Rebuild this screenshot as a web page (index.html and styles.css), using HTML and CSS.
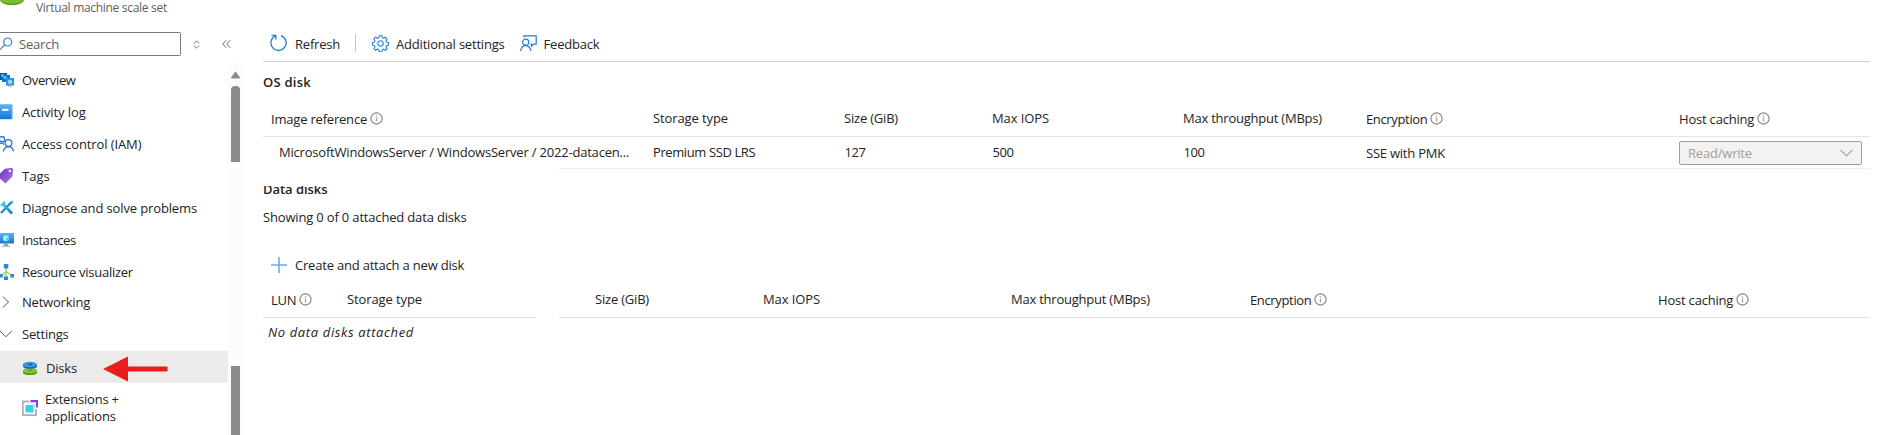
FILE: index.html
```
<!DOCTYPE html>
<html lang="en">
<head>
<meta charset="utf-8">
<title>Disks</title>
<link rel="stylesheet" href="styles.css">
</head>
<body>
<svg width="0" height="0" class="defs" aria-hidden="true">
  <defs>
    <linearGradient id="blue" x1="0" y1="0" x2="0" y2="1"><stop offset="0" stop-color="#5db4f0"/><stop offset="1" stop-color="#0f78d4"/></linearGradient>
    <linearGradient id="purple" x1="0" y1="0" x2="1" y2="1"><stop offset="0" stop-color="#6a35cf"/><stop offset="1" stop-color="#a878dc"/></linearGradient>
    <linearGradient id="teal" x1="0" y1="0" x2="1" y2="1"><stop offset="0" stop-color="#35c5ee"/><stop offset="1" stop-color="#1583bd"/></linearGradient>
    <symbol id="info" viewBox="0 0 13 13"><circle cx="6.5" cy="6.5" r="5.6" fill="none" stroke="#85837f" stroke-width="1.1"/><path d="M6.5 5.600v4M6.500 3.200v1.400" stroke="#a8a6a4" stroke-width="1.400"/></symbol>
  </defs>
</svg>
<div class="app">
  <aside class="side">
    <header class="head">
      <svg class="head-icon" width="24" height="5" viewBox="0 0 24 5"><path d="M0 0H24C23.500 3 18 5 12 5S.5 3 0 0Z" fill="#5e9624"/><path d="M0 0H24C22 2.500 17 3.600 12 3.600S2 2.500 0 0Z" fill="#7ac02d"/></svg>
      <span>Virtual machine scale set</span>
    </header>
    <div class="find">
      <div class="search">
        <svg width="14" height="14" viewBox="0 0 14 14" fill="none" stroke="#2f86d6" stroke-width="1.200"><circle cx="8.700" cy="5" r="4"/><path d="M5.800 7.800 0 13.500"/></svg>
        <span>Search</span>
      </div>
      <svg class="sort" width="7" height="9" viewBox="0 0 7 9" fill="none" stroke="#777" stroke-width="1"><path d="M.8 3.500 3.500.8 6.200 3.500M.8 5.500 3.500 8.200 6.200 5.500"/></svg>
      <svg class="collapse" width="9" height="8" viewBox="0 0 9 8" fill="none" stroke="#6b6967" stroke-width="1"><path d="M4.200.3.700 4 4.200 7.700M8.200.3 4.700 4 8.200 7.700"/></svg>
    </div>
    <div class="body">
      <nav class="menu">
        <a class="item tight"><svg width="15" height="16" viewBox="0 0 15 16"><path d="M0 1h7v7H0z" fill="#0b59a8"/><path d="M2 3h8v7H2z" fill="#1673c8"/><path d="M1 2h3v3H1z" fill="#40a8ee"/><path d="M6 6h8v7.500H6z" fill="#2b8de4"/><path d="M3.500 4h3v3h-3z" fill="#56bdf5"/><path d="m10 7.500 2.200 1.200v2.400L10 12.300 7.800 11.100V8.700z" fill="#9be0fb"/><path d="M7.500 15h4.500l-1-1.500H8.500z" fill="#b3b8bc"/></svg><span>Overview</span></a>
        <a class="item loose"><svg width="15" height="16" viewBox="0 0 15 16"><path d="M0 0h11.500q1.500 0 1.500 1.500v12.500q0 1.500-1.500 1.500H0z" fill="#a5cdea"/><path d="M0 .5h10.500q1.200 0 1.200 1.200V15H0z" fill="url(#blue)"/><path d="M2 4.800h6.500v2H2z" fill="#fff"/></svg><span>Activity log</span></a>
        <a class="item loose"><svg width="15" height="16" viewBox="0 0 15 16" fill="none" stroke="#2b6fd8" stroke-width="1.300"><circle cx="2" cy="3.200" r="2.700"/><path d="M0 7.500q2.500-1 4 1.200"/><circle cx="8.500" cy="7" r="3.400"/><path d="M3.300 15.500q.8-4.500 5.200-4.900 4.300.4 5 4.900"/></svg><span>Access control (IAM)</span></a>
        <a class="item wide"><svg width="15" height="16" viewBox="0 0 15 16"><path d="M5 .8 11.500 0q1.300 0 1.400 1.300L12.600 8 5.500 15.500 0 10.500V5.500z" fill="url(#purple)"/><circle cx="9.800" cy="3" r="1.200" fill="#fff"/></svg><span>Tags</span></a>
        <a class="item diagnose"><svg width="15" height="16" viewBox="0 0 15 16"><path d="M11.500 2 1 13" stroke="#1689c2" stroke-width="2.200"/><path d="m13 1-3 3.500" stroke="#1c9ad4" stroke-width="1.200"/><path d="m2.500 3.500 9.500 10" stroke="url(#teal)" stroke-width="2.800"/><path d="M0 4.800Q2.500 7.500 4.500 5T3.500.8L3 3 1.300 4z" fill="#35c5ee"/></svg><span>Diagnose and solve problems</span></a>
        <a class="item tighter"><svg width="15" height="16" viewBox="0 0 15 16"><path d="M0 1h14v10.500H0z" fill="url(#blue)"/><path d="M4.500 11.500h3L9 14.500H3z" fill="#9da2a6"/><path d="M2 14h8.500v1.200H2z" fill="#c4c7c9"/><path d="M6 3 9 4.600V8L6 9.600 3 8V4.600z" fill="#a6ecfb"/><path d="m6 6.200 3-1.600V8L6 9.600z" fill="#62cdf2"/></svg><span>Instances</span></a>
        <a class="item visual"><svg width="15" height="16" viewBox="0 0 15 16"><path d="M6 4v9M6 7.500 1 11.500M6 7.500l6 4" stroke="#9bd95c" stroke-width="1.500" fill="none"/><path d="M3.800 0h4.500v4.500H3.800zM0 10h2.800v3.500H0zM10.500 10H14v3.500h-3.500zM4 12.500h4V16H4z" fill="#2f87dc"/></svg><span>Resource visualizer</span></a>
        <a class="item group"><svg width="15" height="16" viewBox="0 0 15 16" fill="none" stroke="#555"><path d="m3 2.500 5.500 5.500L3 13.500"/></svg><span>Networking</span></a>
        <a class="item"><svg width="15" height="16" viewBox="0 0 15 16" fill="none" stroke="#555"><path d="m0 5 5.900 5.700L11.800 5"/></svg><span>Settings</span></a>
        <a class="item sub selected"><svg width="15" height="16" viewBox="0 0 15 16"><path d="M0 10.500h14v2.200C14 14.500 10.500 15 7 15s-7-.5-7-2.300z" fill="#5e9a1e"/><ellipse cx="7" cy="10.500" rx="7" ry="2.800" fill="#85c52f"/><ellipse cx="7" cy="10.200" rx="2.500" ry=".8" fill="#5e9a1e"/><path d="M0 4.500h14v1.700C14 8 10.500 8.700 7 8.700S0 8 0 6.200z" fill="#1466b8"/><ellipse cx="7" cy="4.500" rx="7" ry="2.800" fill="#3c95ea"/><ellipse cx="7" cy="4.400" rx="2.500" ry=".8" fill="#1259a5"/></svg><span>Disks</span>
          <svg class="arrow" width="65" height="26" viewBox="0 0 65 26"><path d="M0 13 25 .5V10.500H64.500v5H25V25.500z" fill="#e81e1e"/></svg>
        </a>
        <a class="item sub ext"><svg width="16" height="16" viewBox="0 0 16 16"><path d="M7 1.500H.8V15.200H14V9" fill="none" stroke="#aeb0b2" stroke-width="1.800"/><path d="M3.500 5h8v7.500h-8z" fill="#35d0ee"/><path d="M8.500 1h6.500v6.500" fill="none" stroke="#7d3fdc" stroke-width="1.900"/><path d="M7 2.500h5.500V8.500" fill="none" stroke="#dccdf6"/></svg><span>Extensions +<br>applications</span></a>
      </nav>
      <div class="track">
        <svg width="9" height="8" viewBox="0 0 9 8"><path d="M4.500.3 9 6.500Q9 7.500 8 7.500H1Q0 7.500 0 6.500z" fill="#8b8b8b"/></svg>
        <div class="thumb"></div>
        <div class="thumb rest"></div>
      </div>
    </div>
  </aside>
  <main class="main">
    <div class="toolbar">
      <a class="cmd refresh"><svg width="17" height="18" viewBox="0 0 17 18" fill="none" stroke="#2380d6" stroke-width="1.300"><path d="M11 1.700a7.600 7.600 0 1 1-5.500.2M1.500 1.300h4.300v4.200"/></svg><span>Refresh</span></a>
      <i class="bar"></i>
      <a class="cmd additional"><svg width="17" height="17" viewBox="0 0 17 17" fill="none" stroke="#2380d6" stroke-width="1.050"><circle cx="8.500" cy="8.500" r="2.700"/><path d="M7.200.7h2.600l.4 2 1.400.6L13.400 2.200l1.700 1.700-1.100 1.800.6 1.400 2 .4v2.500l-2 .4-.6 1.400 1.100 1.800-1.700 1.700-1.800-1.100-1.400.6-.4 2H7.200l-.4-2-1.400-.6-1.800 1.100-1.700-1.700L3 11.800l-.6-1.400-2-.4V7.500l2-.4L3 5.700 1.900 3.900l1.700-1.700 1.800 1.100 1.400-.6z"/></svg><span>Additional settings</span></a>
      <a class="cmd feedback"><svg width="17" height="17" viewBox="0 0 17 17" fill="none" stroke="#1c78d2" stroke-width="1.200"><path d="M4 2.500V.9h12.200v8.200h-2.500l-2.200 2V9.200h-1"/><circle cx="5.700" cy="7.300" r="3.100"/><path d="M.6 16q.8-5 5.100-5.600Q10 11 10.900 16"/></svg><span>Feedback</span></a>
    </div>
    <h2 class="title">OS disk</h2>
    <div class="grid os headrow">
      <div class="low">Image reference<svg class="info"><use href="#info"/></svg></div>
      <div class="loose">Storage type</div>
      <div>Size (GiB)</div>
      <div class="loose">Max IOPS</div>
      <div class="snug">Max throughput (MBps)</div>
      <div class="low tight">Encryption<svg class="info"><use href="#info"/></svg></div>
      <div class="low">Host caching<svg class="info"><use href="#info"/></svg></div>
    </div>
    <div class="grid os datarow">
      <div class="image">MicrosoftWindowsServer / WindowsServer / 2022-datacen...</div>
      <div class="tighter">Premium SSD LRS</div>
      <div class="figure">127</div>
      <div class="figure">500</div>
      <div class="figure">100</div>
      <div class="low snug">SSE with PMK</div>
      <div class="select"><span>Read/write</span><svg width="13" height="8" viewBox="0 0 13 8" fill="none" stroke="#a19f9d" stroke-width="1.100"><path d="m.4.800 6.100 6L12.600.8"/></svg></div>
    </div>
    <div class="rowline"></div>
    <div class="clip"><h2>Data disks</h2></div>
    <p class="count">Showing 0 of 0 attached data disks</p>
    <a class="create"><svg width="16" height="16" viewBox="0 0 16 16"><path d="M8 0v16M0 8h16" stroke="#69aae6" stroke-width="1.600"/></svg><span>Create and attach a new disk</span></a>
    <div class="grid data">
      <div class="low lun">LUN<svg class="info"><use href="#info"/></svg></div>
      <div class="loose">Storage type</div>
      <div>Size (GiB)</div>
      <div class="loose">Max IOPS</div>
      <div class="snug">Max throughput (MBps)</div>
      <div class="low tight">Encryption<svg class="info"><use href="#info"/></svg></div>
      <div class="low">Host caching<svg class="info"><use href="#info"/></svg></div>
    </div>
    <div class="split"><i></i><i></i></div>
    <p class="empty">No data disks attached</p>
  </main>
</div>
</body>
</html>
```
FILE: styles.css
```
* { box-sizing: border-box; }
body {
  margin: 0;
  height: 435px;
  overflow: hidden;
  background: #fff;
  color: #242322;
  font: 13px/18px "Open Sans", "Noto Sans", sans-serif;
  letter-spacing: -0.2px;
}
.defs { position: absolute; }
h2, p { margin: 0; }
svg { flex: none; }
.app { display: flex; height: 435px; }

/* letter fit */
.tighter { letter-spacing: -0.4px; }
.tight { letter-spacing: -0.35px; }
.snug { letter-spacing: -0.23px; }
.loose { letter-spacing: -0.1px; }
.wide { letter-spacing: 0.05px; }
.diagnose { letter-spacing: -0.13px; }
.visual { letter-spacing: -0.27px; }
.figure { letter-spacing: -0.45px; padding-left: 0.500px; }
.lun { letter-spacing: -0.3px; }

/* sidebar */
.side { width: 243px; flex: none; display: flex; flex-direction: column; }
.head { display: flex; height: 32px; color: #605e5c; font-size: 12px; letter-spacing: -0.3px; }
.head span { margin: -1px 0 0 12px; }
.find { display: flex; align-items: center; height: 24px; }
.search {
  width: 181px; height: 24px;
  display: flex; align-items: center; gap: 6px;
  border: 1px solid #7d7b79; border-left: 0; border-radius: 0 2px 2px 0;
  color: #605e5c;
}
.search svg { margin: -1px 0 0 -1px; }
.sort { margin-left: 12px; }
.collapse { margin-left: 22px; }
.body { display: flex; flex: 1; padding-top: 7px; }
.menu { width: 228px; padding-top: 1px; }
.item { display: flex; align-items: center; height: 32px; gap: 7px; }
.item.group { margin-top: -2px; }
.item.sub { padding-left: 23px; gap: 8px; }
.item.selected { background: #edebe9; margin-top: 1px; padding-top: 1px; }
.arrow { margin-left: 18px; margin-top: 3px; }
.item.ext { height: 49px; line-height: 17px; gap: 7px; padding-left: 22px; }
.track {
  width: 15px; height: 372px; background: #fcfcfc;
  display: flex; flex-direction: column; align-items: center; padding: 8px 3px 0 3px;
}
.thumb { width: 9px; height: 76px; margin-top: 7px; border-radius: 4px 4px 0 0; background: #8b8b8b; }
.track > * { margin-left: -1px; }
.thumb.rest { height: 69px; margin-top: 204px; border-radius: 0; }

/* main area */
.main { margin-left: 20px; width: 1607px; }
.toolbar { display: flex; align-items: center; height: 62px; padding: 27px 0 0 8px; border-bottom: 1px solid #d2d0ce; }
.cmd { display: flex; align-items: center; height: 34px; }
.cmd svg { margin-top: -2px; }
.cmd span { margin-left: 7px; }
.refresh span { margin-left: 8px; }
.refresh svg { margin-left: -1px; }
.bar { width: 1px; height: 18px; margin-left: 15px; margin-top: -3px; background: #c8c6c4; }
.additional { margin-left: 16px; }
.feedback { margin-left: 15px; }
.title { margin-top: 11px; }
h2 { font-size: 13px; line-height: 18px; font-weight: 600; letter-spacing: 0.25px; }
.grid { display: grid; padding-left: 8px; }
.os { grid-template-columns: 382px 191px 148px 191px 183px 313px 183px; }
.headrow { height: 46px; padding-top: 18px; border-bottom: 1px solid #e4e3e2; }
.low { padding-top: 1px; display: flex; }
.info { width: 13px; height: 13px; margin: 2px 0 0 3px; }
.datarow { height: 31px; padding-top: 6px; }
.image { padding-left: 8px; }
.select {
  display: flex; align-items: center; justify-content: space-between;
  height: 24px; width: 183px; margin-top: -2px; padding: 0 8px;
  border: 1px solid #a19f9d; border-radius: 2px; background: #f3f2f1; color: #a19f9d;
}
.rowline { height: 1px; margin-left: 296px; background: #efeeed; }
.clip { height: 13px; margin-top: 17px; overflow: hidden; }
.clip h2 { margin-top: -6px; letter-spacing: -0.05px; }
.count { margin-top: 9px; letter-spacing: -0.17px; }
.create { display: flex; align-items: center; gap: 8px; height: 18px; margin-top: 30px; padding-left: 8px; }
.create svg { margin-top: -1px; }
.data { grid-template-columns: 76px 248px 168px 248px 239px 408px auto; height: 43px; padding-top: 16px; }
.split { display: flex; gap: 23px; height: 1px; }
.split i { width: 273px; background: #e1dfdd; }
.split i + i { width: 1311px; }
.empty { margin: 5px 0 0 5px; font-style: italic; letter-spacing: 0.63px; }
```
